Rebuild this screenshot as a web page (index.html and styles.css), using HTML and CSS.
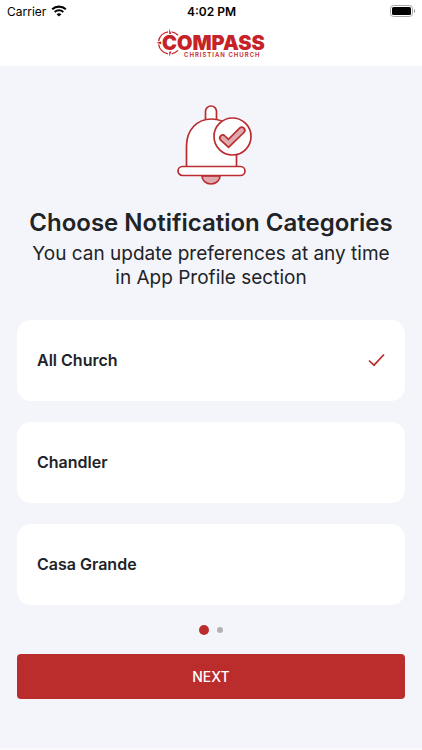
FILE: index.html
```html
<!DOCTYPE html>
<html lang="en">
<head>
    <meta charset="UTF-8">
    <meta name="viewport" content="width=device-width, initial-scale=1.0">
    <title>Notifications | Compass Christian Church</title>
    <link rel="stylesheet" href="styles.css">
</head>
<body>

<header class="header">
    <div class="status-bar">
        <div class="status-left">
            <span>Carrier</span>
            <svg width="16" height="12" viewBox="0 0 16 12" aria-hidden="true">
                <path d="M1.2 4.2a10 10 0 0 1 13.6 0" fill="none" stroke="#000" stroke-width="2.2"/>
                <path d="M3.7 7a6.3 6.3 0 0 1 8.6 0" fill="none" stroke="#000" stroke-width="2"/>
                <path d="M5.6 9.2a3.6 3.6 0 0 1 4.8 0L8 11.6z"/>
            </svg>
        </div>
        <span class="status-time">4:02 PM</span>
        <div class="status-right">
            <svg width="26" height="12" viewBox="0 0 26 12" aria-hidden="true">
                <rect x="0.5" y="0.5" width="22" height="11" rx="3" fill="#fff" stroke="#a6a6a6"/>
                <rect x="2" y="2" width="19" height="8" rx="1.5"/>
                <path d="M24 4v4c1.4-.6 1.4-3.4 0-4z" fill="#8c8c8c"/>
            </svg>
        </div>
    </div>
    <svg class="logo" width="110" height="30" viewBox="0 0 110 30" role="img" aria-label="Compass Christian Church">
        <g fill="none" stroke="#c62328" stroke-width="1.3">
            <path d="M12 3.800A11.400 11.400 0 0 0 2.600 13.200"/>
            <path d="M2.600 16.400a11.400 11.400 0 0 0 9.400 9.400"/>
            <path d="M15.600 3.800a11.400 11.400 0 0 1 6.400 3.400"/>
            <path d="M15.600 25.800a11.400 11.400 0 0 0 6.400-3.400"/>
        </g>
        <path d="M13.200.8l2.200 5.200h-2.200zM13.200 28.800l2.200-5.200h-2.200zM.2 14.800l5-1.400v2.800z" fill="#c62328"/>
        <text class="logo-name" x="6" y="22">COMPASS</text>
        <text class="logo-sub" x="28" y="29">CHRISTIAN CHURCH</text>
    </svg>
</header>

<main class="content">
    <svg class="bell" width="76" height="80" viewBox="0 0 76 80" aria-hidden="true">
        <g stroke="#b92d31" stroke-width="1.7">
            <path d="M25 71a9 8 0 0 0 18 0z" fill="#deaaad"/>
            <path d="M28.500 18V6.500a5.500 5.500 0 0 1 11 0V18" fill="#fff"/>
            <path d="M9.500 66V41C9.500 25 20 14 34.500 14S59.500 25 59.500 41v25z" fill="#fff"/>
            <rect x="1" y="61.500" width="67" height="9" rx="4.500" fill="#fff"/>
            <circle cx="55.500" cy="31.500" r="18.500" fill="#fff"/>
            <path d="M43.700 35.200a3 3 0 0 1 4.300-4.200l3.400 3.300 11.200-11.100a3 3 0 0 1 4.300 4.300L51.600 42.300z" fill="#deaaad"/>
        </g>
    </svg>

    <h1>Choose Notification Categories</h1>
    <p class="subtitle">You can update preferences at any time in App Profile section</p>

    <form>
        <div class="categories">
            <label class="category">
                <span>All Church</span>
                <input type="checkbox" name="category" value="all" checked>
            </label>
            <label class="category">
                <span>Chandler</span>
                <input type="checkbox" name="category" value="chandler">
            </label>
            <label class="category">
                <span>Casa Grande</span>
                <input type="checkbox" name="category" value="casa-grande">
            </label>
        </div>

        <div class="dots">
            <span class="dot active"></span>
            <span class="dot"></span>
        </div>

        <button class="next-btn" type="button">NEXT</button>
    </form>
</main>

<footer class="bottom-bar"></footer>

</body>
</html>
```

FILE: styles.css
```css
* {
    box-sizing: border-box;
}

body {
    display: flex;
    flex-direction: column;
    min-height: 100vh;
    margin: 0;
    background-color: #f4f5fa;
    color: #212327;
    font-family: Inter, "Liberation Sans", sans-serif;
}

.header {
    display: flex;
    flex-direction: column;
    align-items: center;
    padding-bottom: 8px;
    background-color: #fff;
}

.status-bar {
    display: grid;
    grid-template-columns: 1fr auto 1fr;
    align-items: center;
    width: 100%;
    height: 22px;
    padding: 0 6px 0 7px;
    color: #000;
    font-size: 12px;
}

.status-left {
    display: flex;
    align-items: center;
    gap: 5px;
}

.status-time {
    font-weight: 600;
}

.status-right {
    display: flex;
    justify-content: flex-end;
}

.logo {
    display: block;
    margin-top: 6px;
}

.logo-name {
    fill: #c62328;
    font-size: 20px;
    font-weight: 900;
}

.logo-sub {
    fill: #c62328;
    font-size: 6px;
    font-weight: 600;
    letter-spacing: 1px;
}

.content {
    flex: 1;
    padding: 39px 17px 20px;
    text-align: center;
}

.bell {
    display: block;
    margin: 0 auto;
    transform: translateX(4px);
}

h1 {
    margin: 23px 0 4px;
    font-size: 24px;
    font-weight: 600;
    line-height: 30px;
}

.subtitle {
    margin: 0 12px;
    font-size: 19px;
    line-height: 24px;
}

.categories {
    display: flex;
    flex-direction: column;
    gap: 21px;
    margin-top: 30px;
}

.category {
    display: flex;
    align-items: center;
    justify-content: space-between;
    min-height: 81px;
    padding: 20px 20px 22px;
    border-radius: 14px;
    background-color: #fff;
    font-size: 16px;
    font-weight: 600;
    cursor: pointer;
}

.category input {
    appearance: none;
    width: 17px;
    height: 14px;
    margin: 0;
    cursor: pointer;
}

.category input:checked {
    background: url("data:image/svg+xml,%3Csvg xmlns='http://www.w3.org/2000/svg' viewBox='0 0 17 14'%3E%3Cpath d='M1 7.500l5 4.700L16 1.500' fill='none' stroke='%23b92d31' stroke-width='1.700'/%3E%3C/svg%3E") no-repeat center;
}

.dots {
    display: flex;
    align-items: center;
    justify-content: center;
    gap: 8px;
    height: 10px;
    margin: 20px 0 19px;
}

.dot {
    width: 6px;
    height: 6px;
    border-radius: 50%;
    background-color: #b3b2b5;
}

.dot.active {
    width: 10px;
    height: 10px;
    background-color: #bb2c2c;
}

.next-btn {
    display: block;
    width: 100%;
    height: 45px;
    border: none;
    border-radius: 4px;
    background-color: #bb2c2c;
    color: #fff;
    font-family: inherit;
    font-size: 14px;
    font-weight: 500;
    cursor: pointer;
}

.bottom-bar {
    height: 2px;
    background-color: #fafafc;
}
```
